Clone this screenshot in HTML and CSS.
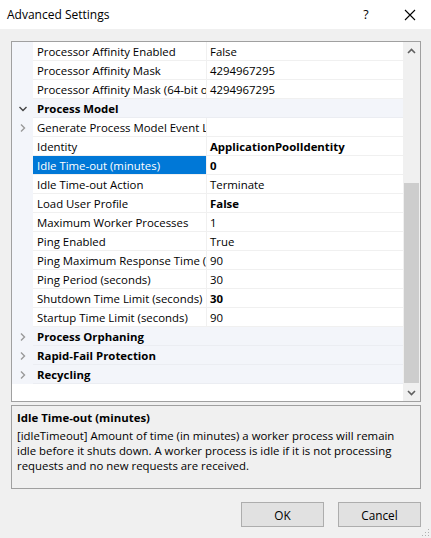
FILE: index.html
```html
<!DOCTYPE html>
<html>
<head>
<meta charset="utf-8">
<link rel="stylesheet" href="styles.css">
</head>
<body>
<div class="window">
  <div class="titlebar">
    <span class="title">Advanced Settings</span>
    <span class="help">?</span>
    <svg class="close" width="12" height="12" viewBox="0 0 12 12"><path d="M1 1L11 11M11 1L1 11" stroke="#000" stroke-width="1.1" fill="none"/></svg>
  </div>
  <div class="content">
    <div class="grid">
      <div class="rows">
        <div class="row"><div class="gutter"></div><div class="name">Processor Affinity Enabled</div><div class="value">False</div></div>
        <div class="row"><div class="gutter"></div><div class="name">Processor Affinity Mask</div><div class="value">4294967295</div></div>
        <div class="row"><div class="gutter"></div><div class="name">Processor Affinity Mask (64-bit option)</div><div class="value">4294967295</div></div>
        <div class="row cat"><div class="gutter"><svg width="10" height="8" viewBox="0 0 10 8"><path d="M1.5 2L5 5.5L8.5 2" stroke="#444" stroke-width="1.4" fill="none"/></svg></div><div class="catname">Process Model</div></div>
        <div class="row"><div class="gutter"><svg width="8" height="10" viewBox="0 0 8 10"><path d="M2 1.5L5.5 5L2 8.5" stroke="#999" stroke-width="1.4" fill="none"/></svg></div><div class="name">Generate Process Model Event Log Entry</div><div class="value"></div></div>
        <div class="row"><div class="gutter"></div><div class="name">Identity</div><div class="value b">ApplicationPoolIdentity</div></div>
        <div class="row sel"><div class="gutter"></div><div class="name">Idle Time-out (minutes)</div><div class="value b">0</div></div>
        <div class="row"><div class="gutter"></div><div class="name">Idle Time-out Action</div><div class="value">Terminate</div></div>
        <div class="row"><div class="gutter"></div><div class="name">Load User Profile</div><div class="value b">False</div></div>
        <div class="row"><div class="gutter"></div><div class="name">Maximum Worker Processes</div><div class="value">1</div></div>
        <div class="row"><div class="gutter"></div><div class="name">Ping Enabled</div><div class="value">True</div></div>
        <div class="row"><div class="gutter"></div><div class="name">Ping Maximum Response Time (seconds)</div><div class="value">90</div></div>
        <div class="row"><div class="gutter"></div><div class="name">Ping Period (seconds)</div><div class="value">30</div></div>
        <div class="row"><div class="gutter"></div><div class="name">Shutdown Time Limit (seconds)</div><div class="value b">30</div></div>
        <div class="row"><div class="gutter"></div><div class="name">Startup Time Limit (seconds)</div><div class="value">90</div></div>
        <div class="row cat"><div class="gutter"><svg width="8" height="10" viewBox="0 0 8 10"><path d="M2 1.5L5.5 5L2 8.5" stroke="#999" stroke-width="1.4" fill="none"/></svg></div><div class="catname">Process Orphaning</div></div>
        <div class="row cat"><div class="gutter"><svg width="8" height="10" viewBox="0 0 8 10"><path d="M2 1.5L5.5 5L2 8.5" stroke="#999" stroke-width="1.4" fill="none"/></svg></div><div class="catname">Rapid-Fail Protection</div></div>
        <div class="row cat"><div class="gutter"><svg width="8" height="10" viewBox="0 0 8 10"><path d="M2 1.5L5.5 5L2 8.5" stroke="#999" stroke-width="1.4" fill="none"/></svg></div><div class="catname">Recycling</div></div>
      </div>
      <div class="scrollbar">
        <div class="arrow"><svg width="9" height="6" viewBox="0 0 9 6"><path d="M1 5L4.5 1.5L8 5" stroke="#606060" stroke-width="1.6" fill="none"/></svg></div>
        <div class="track"><div class="thumb"></div></div>
        <div class="arrow"><svg width="9" height="6" viewBox="0 0 9 6"><path d="M1 1L4.5 4.5L8 1" stroke="#606060" stroke-width="1.6" fill="none"/></svg></div>
      </div>
    </div>
    <div class="desc">
      <div class="desc-title">Idle Time-out (minutes)</div>
      <div class="desc-text">[idleTimeout] Amount of time (in minutes) a worker process will remain idle before it shuts down. A worker process is idle if it is not processing requests and no new requests are received.</div>
    </div>
    <div class="buttons">
      <button class="btn">OK</button>
      <button class="btn">Cancel</button>
    </div>
    <svg class="grip" width="10" height="10" viewBox="0 0 10 10">
      <rect x="8" y="2" width="1" height="1" fill="#b0b0b0"/>
      <rect x="5" y="5" width="1" height="1" fill="#b0b0b0"/>
      <rect x="8" y="5" width="1" height="1" fill="#b0b0b0"/>
      <rect x="2" y="8" width="1" height="1" fill="#b0b0b0"/>
      <rect x="5" y="8" width="1" height="1" fill="#b0b0b0"/>
      <rect x="8" y="8" width="1" height="1" fill="#b0b0b0"/>
    </svg>
  </div>
</div>
</body>
</html>
```
FILE: styles.css
```css
* { box-sizing: border-box; }
html, body { margin: 0; padding: 0; }
body {
  width: 431px;
  height: 538px;
  overflow: hidden;
  font-family: "Open Sans", "Noto Sans", sans-serif;
  font-size: 11.4px;
  color: #000;
  background: #f0f0f0;
}
.window { width: 431px; height: 538px; display: flex; flex-direction: column; }
.titlebar {
  height: 29px;
  background: #fff;
  display: flex;
  align-items: center;
  padding-left: 7px;
  font-size: 12px;
}
.title { flex: 1; }
.help { width: 14px; margin-right: 31px; font-size: 12.5px; text-align: center; }
.close { margin-right: 15px; }
.content {
  position: relative;
  flex: 1;
  padding: 12px 10px 0 11px;
  display: flex;
  flex-direction: column;
}
.grid {
  height: 361px;
  border: 1px solid #a0a0a0;
  background: #fff;
  display: flex;
}
.rows { flex: 1; display: flex; flex-direction: column; }
.row { display: flex; height: 19px; line-height: 18px; }
.gutter {
  width: 21px;
  flex: none;
  background: #f3f5fa;
  display: flex;
  align-items: center;
  justify-content: center;
  padding-left: 1px;
}
.name {
  width: 174px;
  flex: none;
  padding: 1px 0 0 4px;
  white-space: nowrap;
  overflow: hidden;
  border-right: 1px solid #f0f0f0;
  border-bottom: 1px solid #f0f0f0;
}
.value {
  flex: 1;
  padding: 1px 0 0 3px;
  white-space: nowrap;
  overflow: hidden;
  border-bottom: 1px solid #f0f0f0;
}
.b { font-weight: 700; }
.sel .name { background: #0078d7; color: #fff; }
.cat { background: #f3f5fa; }
.catname {
  flex: 1;
  padding: 1px 0 0 4px;
  font-weight: 700;
  border-bottom: 1px solid #ebedf2;
}
.scrollbar {
  width: 17px;
  flex: none;
  background: #f0f0f0;
  display: flex;
  flex-direction: column;
}
.arrow { height: 17px; display: flex; align-items: center; justify-content: center; }
.track { flex: 1; display: flex; flex-direction: column; justify-content: flex-end; }
.thumb { height: 200px; margin: 0 1px 1px 1px; background: #cdcdcd; }
.desc {
  margin-top: 3px;
  height: 84px;
  border: 1px solid #a0a0a0;
  padding: 4px 5px 0 5px;
  background: #f0f0f0;
  line-height: 15px;
}
.desc-title { font-weight: 700; margin-bottom: 3px; }
.buttons {
  margin-top: 13px;
  display: flex;
  justify-content: flex-end;
  gap: 14px;
}
.btn {
  width: 83px;
  height: 25px;
  background: #e1e1e1;
  border: 1px solid #adadad;
  font-family: "Open Sans", "Noto Sans", sans-serif;
  font-size: 11.8px;
  color: #000;
  padding: 0;
}
.grip { position: absolute; right: 1px; bottom: 1px; }
```
